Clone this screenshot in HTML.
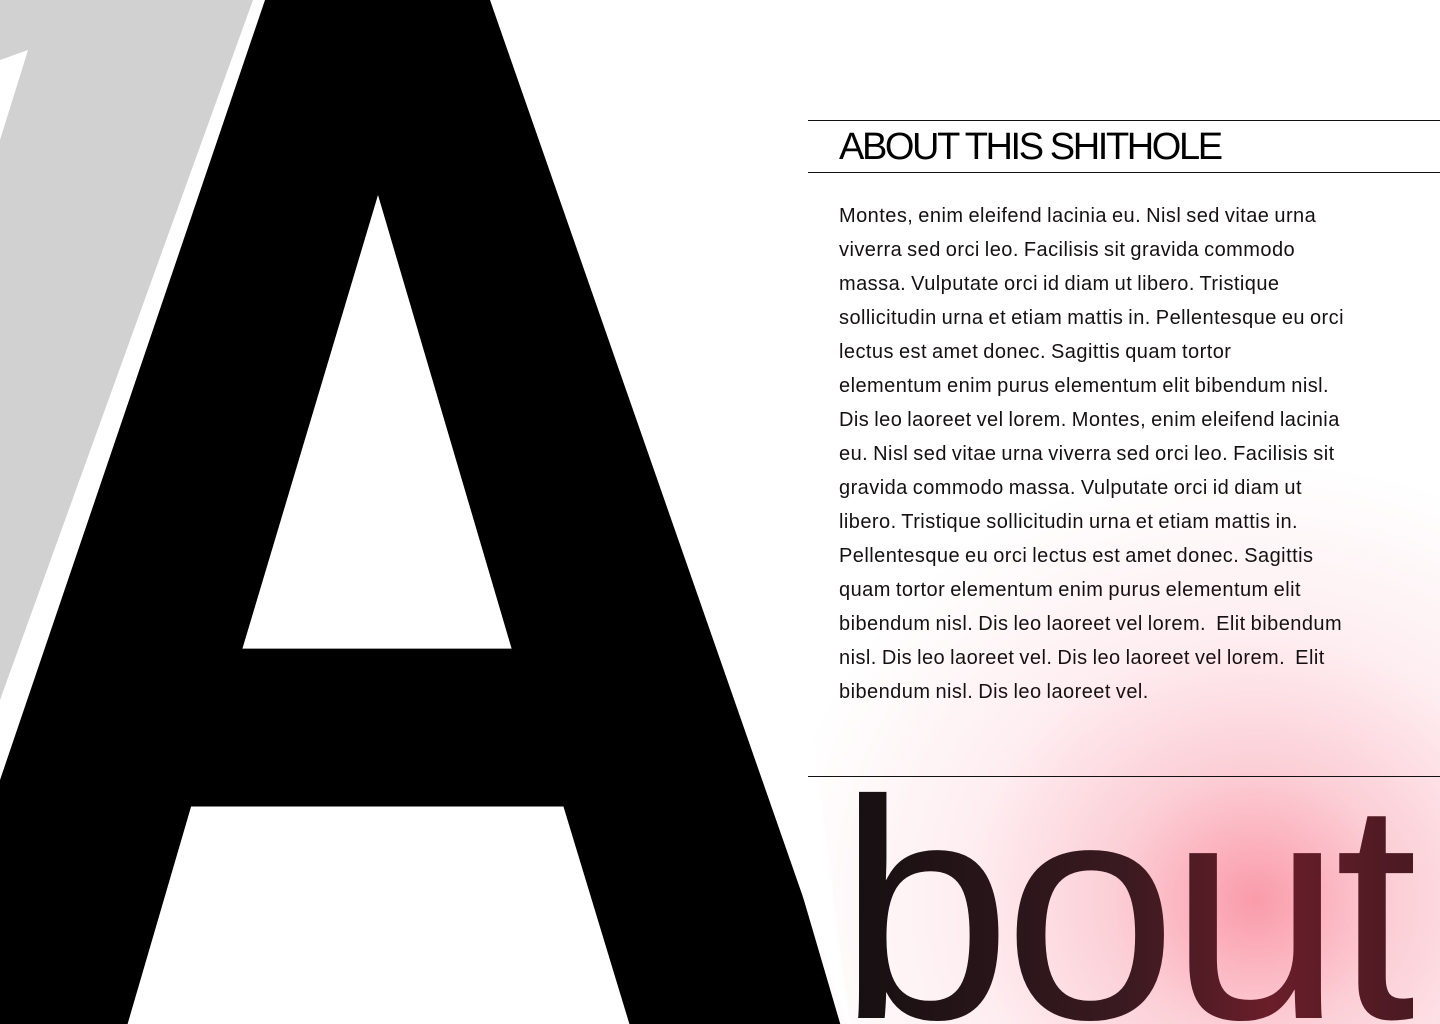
<!DOCTYPE html>
<html><head><meta charset="utf-8"><style>
html,body{margin:0;padding:0;width:1440px;height:1024px;overflow:hidden}
#w{width:1440px;height:1024px;position:relative;overflow:hidden;background:#fff;font-family:"Liberation Sans",sans-serif}
.glow{position:absolute;left:760px;top:420px;width:1000px;height:900px;background:radial-gradient(ellipse 480px 440px at 495px 480px,rgba(250,150,165,.95) 0%,rgba(250,175,188,.6) 30%,rgba(252,205,214,.35) 60%,rgba(255,255,255,0) 100%)}
.line{position:absolute;left:808px;width:632px;height:1px;background:#111}
h1{position:absolute;left:839px;top:126px;margin:0;font-weight:400;font-size:38px;letter-spacing:-2.4px;color:#000;white-space:nowrap}
.body{position:absolute;left:839px;top:199px;font-size:20px;line-height:34px;letter-spacing:0.45px;word-spacing:-1px;color:#151012;white-space:nowrap}
.bout{position:absolute;left:838px;top:755px;font-size:312px;line-height:1;letter-spacing:-8px;font-weight:400;background:linear-gradient(90deg,#140f11 0%,#3a1a20 50%,#6a1e2a 75%,#4a1a22 100%);-webkit-background-clip:text;background-clip:text;color:transparent;white-space:nowrap}
svg{position:absolute;left:0;top:0}
</style></head><body><div id="w">
<div class="glow"></div>
<svg width="1440" height="1024">
<text x="0" y="0" font-family="Liberation Sans" font-size="2170" fill="#000" transform="translate(-149,1243) scale(0.73,1)">A</text>
<polygon points="353,-2 408,-2 590,650 512,650 378,195 242,650 173,650" fill="#000"/>
<polygon points="125,800 193,800 127,1026 62,1026" fill="#000"/>
<polygon points="563,805 634,805 694,1026 630,1026" fill="#000"/>
<polygon points="490,0 720,0 850,1026 848,1026" fill="#fff"/>
<polygon points="0,0 265,0 0,780" fill="#fff"/>
<polygon points="0,0 253,0 0,700" fill="#d1d1d1"/>
<polygon points="0,60 28,50 0,140" fill="#fff"/>
</svg>
<div class="line" style="top:120px"></div>
<div class="line" style="top:172px"></div>
<div class="line" style="top:776px"></div>
<h1>ABOUT THIS SHITHOLE</h1>
<div class="body">Montes, enim eleifend lacinia eu. Nisl sed vitae urna<br>viverra sed orci leo. Facilisis sit gravida commodo<br>massa. Vulputate orci id diam ut libero. Tristique<br>sollicitudin urna et etiam mattis in. Pellentesque eu orci<br>lectus est amet donec. Sagittis quam tortor<br>elementum enim purus elementum elit bibendum nisl.<br>Dis leo laoreet vel lorem. Montes, enim eleifend lacinia<br>eu. Nisl sed vitae urna viverra sed orci leo. Facilisis sit<br>gravida commodo massa. Vulputate orci id diam ut<br>libero. Tristique sollicitudin urna et etiam mattis in.<br>Pellentesque eu orci lectus est amet donec. Sagittis<br>quam tortor elementum enim purus elementum elit<br>bibendum nisl. Dis leo laoreet vel lorem.&nbsp; Elit bibendum<br>nisl. Dis leo laoreet vel. Dis leo laoreet vel lorem.&nbsp; Elit<br>bibendum nisl. Dis leo laoreet vel.</div>
<div class="bout">bout</div>
</div></body></html>
